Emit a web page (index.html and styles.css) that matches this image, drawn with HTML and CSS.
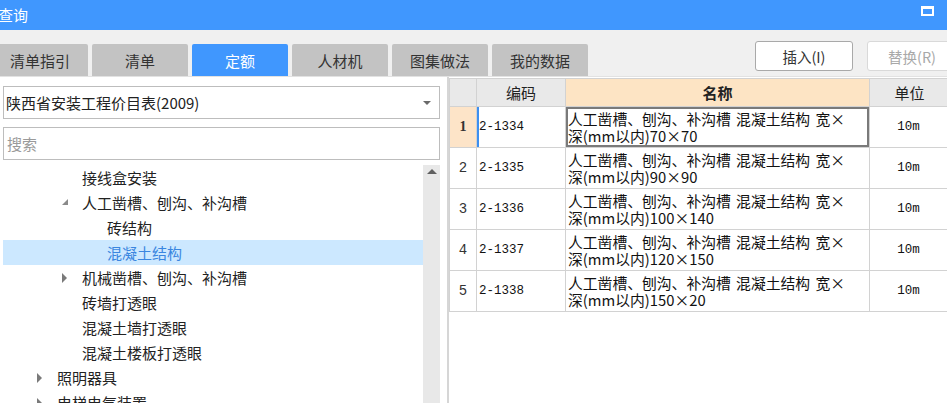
FILE: index.html
```html
<!DOCTYPE html>
<html lang="zh-CN">
<head>
<meta charset="utf-8">
<title>查询</title>
<link rel="stylesheet" href="styles.css">
</head>
<body>
<div class="window">
  <div class="titlebar">
    <span class="title">查询</span>
    <svg class="max-icon" width="13" height="10" viewBox="0 0 13 10"><rect x="1" y="1" width="11" height="8" fill="none" stroke="#fff" stroke-width="2"/><rect x="1" y="1" width="11" height="2" fill="#fff"/></svg>
  </div>
  <div class="toolbar">
    <div class="tabs">
      <div class="tab">清单指引</div>
      <div class="tab">清单</div>
      <div class="tab active">定额</div>
      <div class="tab">人材机</div>
      <div class="tab">图集做法</div>
      <div class="tab">我的数据</div>
    </div>
    <div class="actions">
      <button class="btn">插入(I)</button>
      <button class="btn disabled">替换(R)</button>
    </div>
  </div>
  <div class="main">
    <div class="left">
      <div class="select">
        <span>陕西省安装工程价目表(2009)</span>
        <span class="caret"></span>
      </div>
      <div class="search"><span class="placeholder">搜索</span></div>
      <div class="tree-wrap">
        <div class="tree">
          <div class="node lv3"><span class="tog"></span><span>接线盒安装</span></div>
          <div class="node lv3"><span class="tog"><svg width="7" height="7" viewBox="0 0 7 7"><polygon points="6,0 6,6 0,6" fill="#8a8a8a"/></svg></span><span>人工凿槽、刨沟、补沟槽</span></div>
          <div class="node lv4"><span class="tog"></span><span>砖结构</span></div>
          <div class="node lv4 selected"><span class="tog"></span><span>混凝土结构</span></div>
          <div class="node lv3"><span class="tog"><svg width="6" height="10" viewBox="0 0 6 10"><polygon points="0,0 5,5 0,10" fill="#7a7a7a"/></svg></span><span>机械凿槽、刨沟、补沟槽</span></div>
          <div class="node lv3"><span class="tog"></span><span>砖墙打透眼</span></div>
          <div class="node lv3"><span class="tog"></span><span>混凝土墙打透眼</span></div>
          <div class="node lv3"><span class="tog"></span><span>混凝土楼板打透眼</span></div>
          <div class="node lv2"><span class="tog"><svg width="6" height="10" viewBox="0 0 6 10"><polygon points="0,0 5,5 0,10" fill="#7a7a7a"/></svg></span><span>照明器具</span></div>
          <div class="node lv2"><span class="tog"><svg width="6" height="10" viewBox="0 0 6 10"><polygon points="0,0 5,5 0,10" fill="#7a7a7a"/></svg></span><span>电梯电气装置</span></div>
        </div>
        <div class="vscroll"><span class="up"></span></div>
      </div>
    </div>
    <div class="right">
      <table class="grid">
        <colgroup>
          <col class="c-no"><col class="c-code"><col class="c-name"><col class="c-unit">
        </colgroup>
        <thead>
          <tr><th></th><th>编码</th><th class="hl">名称</th><th>单位</th></tr>
        </thead>
        <tbody>
          <tr class="cur"><td class="no">1</td><td class="code">2-1334</td><td class="name focus">人工凿槽、刨沟、补沟槽 混凝土结构 宽×<br>深(mm以内)70×70</td><td class="unit">10m</td></tr>
          <tr><td class="no">2</td><td class="code">2-1335</td><td class="name">人工凿槽、刨沟、补沟槽 混凝土结构 宽×<br>深(mm以内)90×90</td><td class="unit">10m</td></tr>
          <tr><td class="no">3</td><td class="code">2-1336</td><td class="name">人工凿槽、刨沟、补沟槽 混凝土结构 宽×<br>深(mm以内)100×140</td><td class="unit">10m</td></tr>
          <tr><td class="no">4</td><td class="code">2-1337</td><td class="name">人工凿槽、刨沟、补沟槽 混凝土结构 宽×<br>深(mm以内)120×150</td><td class="unit">10m</td></tr>
          <tr><td class="no">5</td><td class="code">2-1338</td><td class="name">人工凿槽、刨沟、补沟槽 混凝土结构 宽×<br>深(mm以内)150×20</td><td class="unit">10m</td></tr>
        </tbody>
      </table>
    </div>
  </div>
</div>
</body>
</html>
```

FILE: styles.css
```css
* { box-sizing: border-box; }
html, body {
  margin: 0;
  padding: 0;
  width: 947px;
  height: 403px;
  overflow: hidden;
  background: #ffffff;
  font-family: "Noto Sans CJK SC", "Noto Sans", sans-serif;
  color: #222;
}
.window {
  width: 947px;
  height: 403px;
  display: flex;
  flex-direction: column;
  overflow: hidden;
}
.titlebar {
  height: 30px;
  flex: 0 0 30px;
  background: #4097fe;
  display: flex;
  align-items: center;
  justify-content: space-between;
  padding-right: 13px;
}
.title {
  color: #fff;
  font-size: 15px;
  margin-left: -2px;
  line-height: 30px;
}
.max-icon { display: block; margin-top: -8px; }

.toolbar {
  height: 47px;
  flex: 0 0 47px;
  background: #f0f0f0;
  display: flex;
  justify-content: space-between;
  border-bottom: 1px solid #e2e2e2;
}
.tabs {
  display: flex;
  gap: 4px;
  margin-left: -8px;
  align-self: flex-end;
}
.tab {
  width: 96px;
  height: 32px;
  background: #c3c3c3;
  border-radius: 2px 2px 0 0;
  display: flex;
  align-items: center;
  justify-content: center;
  font-size: 15px;
  color: #333;
}
.tab.active { background: #4097fe; color: #fff; }

.actions {
  display: flex;
  gap: 14px;
  margin-top: 11px;
  margin-right: -10px;
  align-self: flex-start;
}
.btn {
  width: 98px;
  height: 30px;
  background: #fff;
  border: 1px solid #a9a9a9;
  border-radius: 3px;
  font-family: "Noto Sans CJK SC", sans-serif;
  font-size: 14.5px;
  color: #333;
  padding: 0;
}
.btn.disabled { border-color: #d9d9d9; color: #a8a8a8; width: 90px; }

.main {
  flex: 1;
  display: flex;
  min-height: 0;
}
.left {
  width: 447px;
  flex: 0 0 447px;
  background: #fff;
  padding: 9px 7px 0 3px;
  display: flex;
  flex-direction: column;
}
.select {
  height: 33px;
  border: 1px solid #bdbdbd;
  display: flex;
  align-items: center;
  justify-content: space-between;
  padding: 0 8px 0 2px;
  font-size: 15px;
  color: #222;
}
.caret {
  width: 0; height: 0;
  border-left: 4px solid transparent;
  border-right: 4px solid transparent;
  border-top: 4px solid #6a6a6a;
}
.search {
  height: 33px;
  margin-top: 8px;
  border: 1px solid #bdbdbd;
  display: flex;
  align-items: center;
  padding-left: 3px;
  font-size: 15px;
}
.placeholder { color: #9a9a9a; }

.tree-wrap {
  flex: 1;
  display: flex;
  margin-top: 5px;
  min-height: 0;
}
.tree { flex: 1; overflow: hidden; }
.node {
  height: 25px;
  display: flex;
  align-items: center;
  font-size: 15px;
  color: #222;
  white-space: nowrap;
}
.node.lv2 { padding-left: 34px; }
.node.lv3 { padding-left: 59px; }
.node.lv4 { padding-left: 84px; }
.node.selected { background: #cce8ff; color: #3a86e0; }
.tog {
  width: 20px;
  flex: 0 0 20px;
  display: flex;
  align-items: center;
}
.tog svg { display: block; }
.vscroll {
  width: 17px;
  flex: 0 0 17px;
  background: #e8e8e8;
  display: flex;
  justify-content: center;
  padding-top: 4px;
}
.up {
  width: 0; height: 0;
  border-left: 5px solid transparent;
  border-right: 5px solid transparent;
  border-bottom: 5px solid #606060;
}

.right {
  flex: 1;
  background: #fff;
  border-left: 2px solid #d6d6d6;
  padding-top: 1px;
  overflow: hidden;
}
.grid {
  border-collapse: collapse;
  table-layout: fixed;
  width: 500px;
  font-family: "Noto Sans CJK SC", sans-serif;
}
.c-no { width: 27px; }
.c-code { width: 89px; }
.c-name { width: 304px; }
.c-unit { width: 80px; }
.grid th, .grid td {
  border: 1px solid #d2d2d2;
  padding: 0;
}
.grid th {
  height: 28px;
  background: #e9e9e9;
  font-weight: normal;
  font-size: 15px;
  color: #222;
  text-align: center;
}
.grid th.hl { background: #fde4c4; font-weight: bold; }
.grid td {
  height: 41px;
  font-size: 14px;
  color: #111;
  vertical-align: middle;
}
.grid td.no {
  text-align: center;
  font-family: "Liberation Mono", monospace;
  font-size: 14px;
  color: #333;
}
.grid tr.cur td.no { background: #fde4c8; font-weight: bold; font-family: "Liberation Serif", serif; }
.grid td.code {
  font-family: "Liberation Mono", monospace;
  font-size: 12.5px;
  padding-left: 2px;
}
.grid tr.cur td.code { box-shadow: inset 2px 0 0 #3d8ff0; }
.grid td.name {
  font-size: 14.8px;
  line-height: 17px;
  padding: 1px 0 1px 2px;
  white-space: nowrap;
  overflow: hidden;
  word-spacing: 2px;
}
.grid td.focus { box-shadow: inset 0 0 0 2px #7a7a7a; }
.grid td.unit {
  text-align: center;
  font-family: "Liberation Mono", monospace;
  font-size: 12.5px;
  padding-right: 2px;
}
```
